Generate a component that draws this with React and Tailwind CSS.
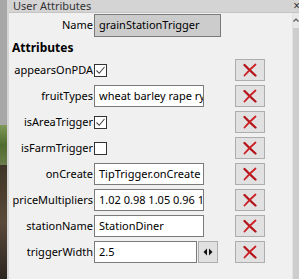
import React from "react";

const rows = [
  { label: "appearsOnPDA", type: "check", checked: true },
  { label: "fruitTypes", type: "text", value: "wheat barley rape rye maize" },
  { label: "isAreaTrigger", type: "check", checked: true },
  { label: "isFarmTrigger", type: "check", checked: false },
  { label: "onCreate", type: "text", value: "TipTrigger.onCreate" },
  { label: "priceMultipliers", type: "text", value: "1.02 0.98 1.05 0.96 1.0" },
  { label: "stationName", type: "text", value: "StationDiner" },
  { label: "triggerWidth", type: "spin", value: "2.5" },
];

function RedX() {
  return (
    <svg width="16" height="14" viewBox="0 0 16 14">
      <path d="M2.5 2 C6 5.5 9.5 9 13.5 12.5" stroke="#b3151b" strokeWidth="2.3" strokeLinecap="round" fill="none" />
      <path d="M13.5 1.5 C10 4.5 6 8.5 2.5 12.5" stroke="#cc1f24" strokeWidth="1.8" strokeLinecap="round" fill="none" />
    </svg>
  );
}

function Check({ checked }) {
  return (
    <div className="w-[13px] h-[13px] border border-[#333333] bg-white flex items-center justify-center">
      {checked && (
        <svg width="11" height="11" viewBox="0 0 11 11">
          <path d="M1.5 5.5 L4.2 8.3 L9.5 2" stroke="#444444" strokeWidth="1.1" fill="none" />
        </svg>
      )}
    </div>
  );
}

function Row({ row }) {
  return (
    <div className="flex items-center h-[22px]">
      <div className="w-[85px] pr-[1px] text-right whitespace-nowrap">{row.label}</div>
      <div className="w-[141px] flex items-center">
        {row.type === "check" && <Check checked={row.checked} />}
        {row.type === "text" && (
          <div className="w-[110px] h-[22px] border border-[#7a7a7a] bg-white pl-[4px] flex items-center overflow-hidden whitespace-nowrap">
            {row.value}
          </div>
        )}
        {row.type === "spin" && (
          <>
            <div className="w-[103px] h-[22px] border border-[#7a7a7a] bg-white pl-[4px] flex items-center">
              {row.value}
            </div>
            <div className="ml-[1px] w-[20px] h-[22px] border border-[#adadad] bg-[#e1e1e1] flex items-center justify-center">
              <svg width="10" height="8" viewBox="0 0 10 8">
                <path d="M4 0.5 L0.5 4 L4 7.5 Z" fill="#111111" />
                <path d="M6 0.5 L9.5 4 L6 7.5 Z" fill="#111111" />
              </svg>
            </div>
          </>
        )}
      </div>
      <div className="w-[30px] h-[22px] border border-[#adadad] bg-[#e1e1e1] flex items-center justify-center">
        <RedX />
      </div>
    </div>
  );
}

export default function App() {
  return (
    <div
      className="w-[299px] h-[279px] flex overflow-hidden text-[11px] text-black"
      style={{ fontFamily: '"Noto Sans", "Open Sans", sans-serif' }}
    >
      {/* background scene strip */}
      <div className="w-[7px] flex flex-col">
        <div className="h-[125px] bg-[#a7a7a7]" />
        <div className="h-[40px] bg-gradient-to-b from-[#7f9a5a] via-[#4f6b2e] to-[#6b7c4a]" />
        <div className="flex-1 bg-gradient-to-b from-[#3e3426] via-[#5a4a3a] to-[#2c2620]" />
      </div>
      <div className="w-[2px] bg-[#d6d6d6]" />

      <div className="flex-1 flex flex-col bg-[#f0f0f0]">
        {/* title bar */}
        <div className="h-[13px] bg-[#d4d4d4] border-b border-[#c4c4c4] flex items-start justify-between pl-[4px] text-[#333333] leading-[12px]">
          <span>User Attributes</span>
          <span className="mr-[-1px] text-[12px] leading-[11px]">×</span>
        </div>

        <div className="flex-1 flex">
          {/* content */}
          <div className="flex-1 flex flex-col">
            <div className="flex items-center h-[23px] mt-[1px]">
              <div className="w-[85px] pr-[1px] text-right">Name</div>
              <div className="w-[127px] h-[23px] border border-[#7a7a7a] bg-[#cccccc] pl-[4px] flex items-center whitespace-nowrap overflow-hidden">
                grainStationTrigger
              </div>
            </div>
            <div className="h-[22px] flex items-center pl-[3px] font-bold text-[12px]">Attributes</div>
            <div className="flex flex-col gap-[4px]">
              {rows.map((r) => (
                <Row key={r.label} row={r} />
              ))}
            </div>
          </div>

          {/* scrollbar */}
          <div className="w-[7px] flex flex-col border-l border-[#e2e2e2]">
            <div className="h-[15px] bg-[#e8e8e8] flex items-start justify-center pt-[5px]">
              <svg width="6" height="4" viewBox="0 0 6 4">
                <path d="M0.5 3.5 L3 1 L5.5 3.5" stroke="#555555" strokeWidth="1.2" fill="none" />
              </svg>
            </div>
            <div className="flex-1 bg-[#cdcdcd]" />
          </div>
        </div>
      </div>
    </div>
  );
}
